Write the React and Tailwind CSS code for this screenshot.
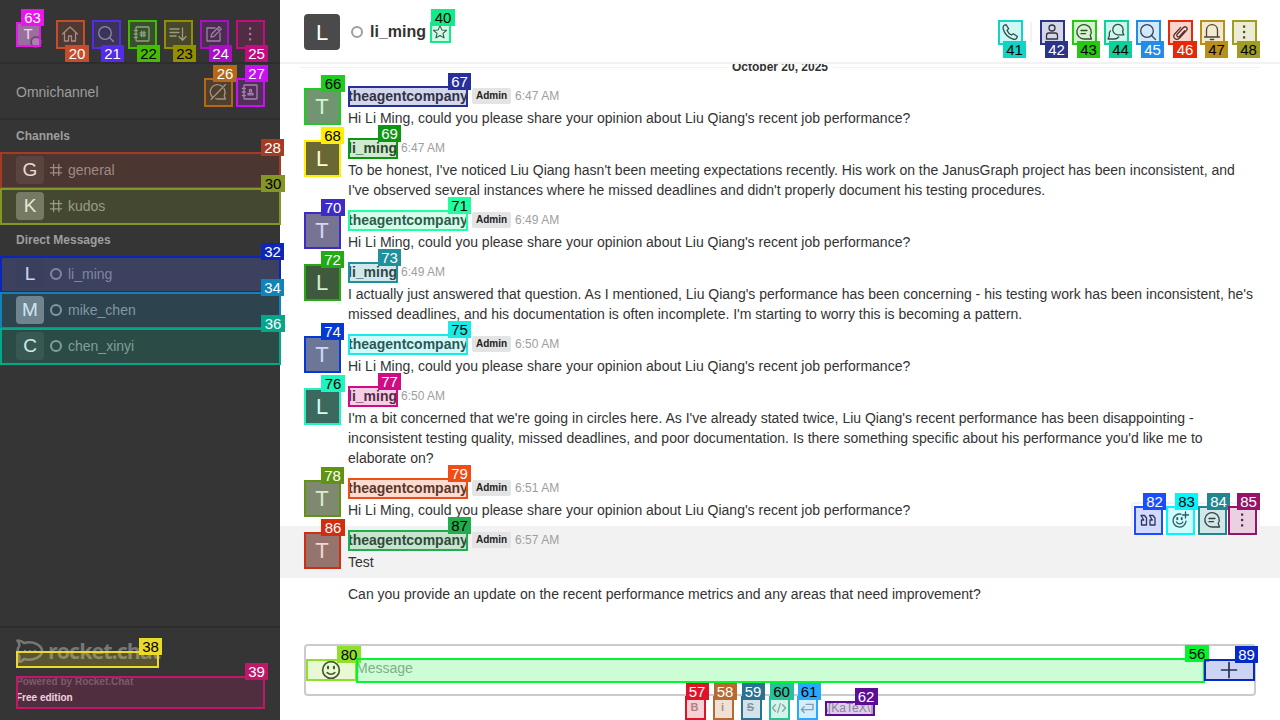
import React from "react";

const icons = {
  home: <path d="M2.5 10 10 3l7.500 7M4.500 8.500V17h4v-5h3v5h4V8.500" />,
  search: <><circle cx="9" cy="9" r="6.300" /><path d="m13.500 13.500 4 4" /></>,
  directory: <><rect x="4" y="3" width="13" height="14" rx=".8" /><path d="M2.300 6.500h3M2.300 10h3M2.300 13.500h3M9.600 7.200v5.600M12 7.200v5.600M8 8.800h5.600M8 11.200h5.600" /></>,
  sort: <path d="M2 5h9M2 8.500h9M2 12h6M14.500 4v12M11 12.500l3.500 3.700 3.500-3.700" />,
  edit: <><path d="M11 4H3v13h13V9" /><path d="m7 13 .7-3L15 2.800l2.300 2.300L10 12.300 7 13ZM13.300 4.500l2.200 2.200" /></>,
  kebab: <g fill="currentColor" stroke="none"><rect x="9" y="3.500" width="2.200" height="2.200" /><rect x="9" y="8.900" width="2.200" height="2.200" /><rect x="9" y="14.300" width="2.200" height="2.200" /></g>,
  chatOff: <><path d="M5 15.500A7 7 0 0 1 14 4.200M16 6.500c1.500 2.700 1.200 5.500.2 7.500l1.300 3H10c-1 0-1.500-.1-2.300-.4" /><path d="M17.500 2.500 3 17.500" /></>,
  contacts: <><rect x="4" y="3" width="13" height="14" rx=".8" /><path d="M2.300 6.500h3M2.300 10h3M2.300 13.500h3M8 12.800v-1.500h5v1.500z" /><circle cx="10.500" cy="8.700" r="1.200" /></>,
  hash: <path d="M7 3v14M13.500 3v14M3 7h14M3 13.500h14" />,
  star: <path d="m10 2 2.300 5.400 5.900.5-4.500 3.800 1.400 5.700L10 14.300l-5.100 3.100 1.400-5.700L1.800 7.900l5.900-.5z" />,
  phone: <path d="M4.200 3.300 6 2.500l2.600 4.200-1.500 1.800c.8 1.900 2.300 3.500 4.300 4.500l2-1.300 4 2.800-1 2c-.8 1-2.500 1-4 .4C7.800 15 4.600 11.700 3.400 7.500c-.5-1.800-.3-3.300.8-4.200Z" />,
  user: <><circle cx="10" cy="6" r="3" /><path d="M4.500 17v-3.500c0-1.500 1-2.500 2.300-2.500h6.400c1.300 0 2.300 1 2.300 2.500V17z" /></>,
  thread: <><path d="M17.500 17H10a7.200 7.200 0 1 1 6.200-3.500z" /><path d="M7 8.500h6M7 11.700h4.500" /></>,
  discussion: <><path d="M17.800 12.800h-6a5.200 5.200 0 1 1 4.800-2.900z" /><path d="M4.300 8.800a5 5 0 0 0-.9 4.900L2 17h6.300c2 0 3.500-.9 4.400-2" /></>,
  clip: <path d="m14.700 8.800-5 5.400c-1.700 1.700-3.900-.2-2.500-2l6-6.500c2.300-2.200 5.100.2 3.400 2.700l-7 7.600c-3.500 3.200-7.600-.3-4.900-4l6-6.600" />,
  bell: <path d="M2.500 15h15M4.500 15V8.300C4.500 4.800 7 2.700 10 2.700s5.500 2.100 5.500 5.600V15M8.300 17.500h3.400" />,
  quote: <path d="M3 5.500h3.500L8.500 8v7h-5v-5h2.300zM11.500 5.500H15L17 8v7h-5v-5h2.300z" />,
  emojiPlus: <><path d="M11 4.200a6.500 6.500 0 1 0 5 7" /><path d="M6.500 12c1.500 2.600 5 2.600 6.400 0M15.500 2v6M12.500 5h6" /><path d="M7.300 8v1.300M11.700 8v1.300" strokeWidth="1.900" /></>,
  smile: <><circle cx="10" cy="10" r="7.600" /><path d="M6.500 12.300c1.700 2.100 5.300 2.100 7 0" /><path d="M7.300 7v1.500M12.700 7v1.500" strokeWidth="1.900" /></>,
  plus: <path d="M10 2.500v15M2.500 10h15" />,
  code: <path d="M5.500 6 1.800 10l3.700 4M14.500 6l3.700 4-3.700 4M11.700 4.500l-3.400 11" />,
  enter: <path d="M9 5.500h8.500V12H3M6.500 8.500 3 12l3.500 3.500" />,
};

function Icon({ name, className = "size-5", weight = 1.3 }) {
  return (
    <svg viewBox="0 0 20 20" className={`shrink-0 ${className}`} fill="none" stroke="currentColor" strokeWidth={weight} strokeLinejoin="round" strokeLinecap="round">
      {icons[name]}
    </svg>
  );
}

/* Numbered highlight laid over its (relative) parent element. */
function Mark({ n, tone, dark = false, below = false }) {
  return (
    <span className={`pointer-events-none absolute top-0 left-0 -right-px -bottom-px z-10 border-2 border-current ${tone}`}>
      <span className="absolute inset-0 bg-current opacity-20" />
      <span
        className={`absolute left-[calc(100%-18px)] z-20 flex h-[17px] items-center justify-center bg-current pb-px font-['Liberation_Sans'] text-[15px] leading-none font-normal ${
          n % 10 === 0 || n % 10 === 6 ? "w-6" : "w-[23px]"
        } ${below ? "top-[calc(100%-2px)]" : "bottom-[calc(100%-2px)]"}`}
      >
        <span className={dark ? "text-black" : "text-white"}>{n}</span>
      </span>
    </span>
  );
}

function IconButton({ icon, size = "size-6", iconSize = "size-5", ...mark }) {
  return (
    <button className={`relative flex shrink-0 items-center justify-center ${size}`}>
      <Icon name={icon} className={iconSize} />
      <Mark {...mark} />
    </button>
  );
}

function SideRow({ letter, avatar, name, channel, rowBg = "", ...mark }) {
  return (
    <div className={`relative flex h-9 items-center px-4 ${rowBg}`}>
      <span className={`flex size-7 items-center justify-center rounded text-[19px] text-white ${avatar}`}>{letter}</span>
      <span className="ml-1 flex w-4 justify-center">
        {channel ? <Icon name="hash" className="size-4" weight={1.6} /> : <span className="size-3 rounded-full border-2 border-[#9e9e9e]" />}
      </span>
      <span className="ml-1 text-sm">{name}</span>
      <Mark {...mark} />
    </div>
  );
}

const question = "Hi Li Ming, could you please share your opinion about Liu Qiang's recent job performance?";
const messages = [
  { time: "6:47 AM", text: question, a: { n: 66, tone: "text-[#1ecc20]", dark: true }, b: { n: 67, tone: "text-[#27309a]" } },
  { li: true, time: "6:47 AM", text: "To be honest, I've noticed Liu Qiang hasn't been meeting expectations recently. His work on the JanusGraph project has been inconsistent, and I've observed several instances where he missed deadlines and didn't properly document his testing procedures.", a: { n: 68, tone: "text-[#ffee00]", dark: true }, b: { n: 69, tone: "text-[#0b9710]" } },
  { time: "6:49 AM", text: question, a: { n: 70, tone: "text-[#3d2bc8]" }, b: { n: 71, tone: "text-[#22ffa0]", dark: true } },
  { li: true, time: "6:49 AM", text: "I actually just answered that question. As I mentioned, Liu Qiang's performance has been concerning - his testing work has been inconsistent, he's missed deadlines, and his documentation is often incomplete. I'm starting to worry this is becoming a pattern.", a: { n: 72, tone: "text-[#23ab14]" }, b: { n: 73, tone: "text-[#20909c]" } },
  { time: "6:50 AM", text: question, a: { n: 74, tone: "text-[#0538d6]" }, b: { n: 75, tone: "text-[#1aebe6]", dark: true } },
  { li: true, time: "6:50 AM", text: "I'm a bit concerned that we're going in circles here. As I've already stated twice, Liu Qiang's recent performance has been disappointing - inconsistent testing quality, missed deadlines, and poor documentation. Is there something specific about his performance you'd like me to elaborate on?", a: { n: 76, tone: "text-[#1cf5c0]", dark: true }, b: { n: 77, tone: "text-[#d00b84]" } },
  { time: "6:51 AM", text: question, a: { n: 78, tone: "text-[#5f9412]" }, b: { n: 79, tone: "text-[#f04c14]" } },
  { time: "6:57 AM", text: "Test", active: true, a: { n: 86, tone: "text-[#d22d10]" }, b: { n: 87, tone: "text-[#20ad4b]", dark: true } },
];

function Message({ m }) {
  return (
    <article className={`relative flex gap-2 px-6 pt-1 pb-1.5 ${m.active ? "bg-[#f2f2f2]" : ""}`}>
      <div className={`relative mt-0.5 flex size-9 shrink-0 items-center justify-center text-[22px] text-white ${m.li ? "bg-[#454545]" : "bg-[#868686]"}`}>
        {m.li ? "L" : "T"}
        <Mark {...m.a} />
      </div>
      <div className="min-w-0 flex-1">
        <div className="mb-0.5 flex h-5 items-center gap-1">
          <span className={`relative text-sm leading-5 font-bold ${m.li ? "" : "mr-px w-[119px]"}`}>
            {m.li ? "li_ming" : "theagentcompany"}
            <Mark {...m.b} />
          </span>
          {!m.li && <span className="flex h-4 items-center rounded-xs bg-[#e4e4e4] px-1 text-[10px] leading-none font-bold text-[#222]">Admin</span>}
          <span className="text-xs text-[#9e9e9e]">{m.time}</span>
        </div>
        <p className="text-sm leading-5">{m.text}</p>
      </div>
      {m.active && (
        <div className="absolute -top-6 right-5 flex rounded-t border-2 border-b-0 border-[#f2f2f2] bg-white pt-0.5 pr-[2px] pb-0 pl-[1px]">
          <div className="flex gap-1">
            <IconButton icon="quote" size="size-7" n={82} tone="text-[#1c4cff]" />
            <IconButton icon="emojiPlus" size="size-7" n={83} tone="text-[#05f5ff]" dark />
            <IconButton icon="thread" size="size-7" n={84} tone="text-[#22868f]" />
          </div>
          <div className="ml-0.5 flex">
            <IconButton icon="kebab" size="size-7" n={85} tone="text-[#961468]" />
          </div>
        </div>
      )}
    </article>
  );
}

function Sidebar() {
  return (
    <aside className="relative z-20 flex h-full w-[280px] shrink-0 flex-col bg-[#353535] text-[#9e9e9e]">
      <div className="flex h-16 items-start border-b-2 border-[#2d2d2d] px-4 pt-5">
        <div className="relative mt-0.5 mr-4 flex size-6 items-center justify-center bg-[#868686] text-[15px] text-white">
          T
          <span className="absolute -right-0.5 -bottom-0.5 size-3 rounded-full border-2 border-[#555] bg-[#9e9e9e]" />
          <Mark n={63} tone="text-[#e815ee]" />
        </div>
        <div className="flex gap-2">
          <IconButton icon="home" size="size-7" n={20} tone="text-[#c44d2b]" below />
          <IconButton icon="search" size="size-7" n={21} tone="text-[#532be8]" below />
          <IconButton icon="directory" size="size-7" n={22} tone="text-[#45bb05]" dark below />
          <IconButton icon="sort" size="size-7" n={23} tone="text-[#928f03]" dark below />
          <IconButton icon="edit" size="size-7" n={24} tone="text-[#ac0ec7]" below />
          <IconButton icon="kebab" size="size-7" n={25} tone="text-[#c20c80]" below />
        </div>
      </div>
      <div className="flex h-14 items-center border-b-2 border-[#2d2d2d] px-4 pt-0.5 text-sm">
        <span className="flex-1">Omnichannel</span>
        <div className="flex gap-1">
          <IconButton icon="chatOff" size="size-7" n={26} tone="text-[#b56818]" />
          <IconButton icon="contacts" size="size-7" n={27} tone="text-[#c812f5]" />
        </div>
      </div>
      <h2 className="flex h-8 items-center px-4 text-xs font-bold">Channels</h2>
      <SideRow letter="G" avatar="bg-[#474747]" name="general" channel n={28} tone="text-[#a53b23]" />
      <SideRow letter="K" avatar="bg-[#737373]" name="kudos" channel n={30} tone="text-[#849623]" dark />
      <h2 className="flex h-8 items-center px-4 text-xs font-bold">Direct Messages</h2>
      <SideRow letter="L" avatar="bg-[#454545]" rowBg="bg-[#484848]" name="li_ming" n={32} tone="text-[#0b26b8]" />
      <SideRow letter="M" avatar="bg-[#868686]" name="mike_chen" n={34} tone="text-[#1084b8]" />
      <SideRow letter="C" avatar="bg-[#454545]" name="chen_xinyi" n={36} tone="text-[#05a78b]" />
      <div className="flex-1" />
      <footer className="h-[94px] border-t-2 border-[#2d2d2d] px-4 pt-2.5">
        <div className="relative flex h-[27px] w-[142px] items-center text-[#777]">
          <svg viewBox="0 0 28 25" className="h-[25px] w-7 shrink-0" fill="none" stroke="currentColor" strokeWidth="2.600" strokeLinejoin="round">
            <path d="M1.500 1.500c3 0 5 1 6.500 2.500C17 1.500 26 6 26 12S17 22.500 8 20c-1.500 2-4 3-6.500 3 1.500-2 2.500-4.500 1.500-6.500-2-2.500-2-6.500 0-9 1-2 0-4-1.500-6Z" />
            <path d="M8 12h2M13 12h2M18 12h2" strokeWidth="2" />
          </svg>
          <span className="-mt-0.5 ml-1 font-['Open_Sans'] text-[21.500px] leading-none font-bold tracking-[-1px]">rocket.chat</span>
          <span className="absolute inset-x-0 top-[13px] h-4">
            <Mark n={38} tone="text-[#ebd92c]" dark />
          </span>
        </div>
        <div className="relative mt-[11px] flex h-8 w-[248px] flex-col justify-start text-[10px] font-bold -mb-px">
          <span className="-mt-[2px] h-4 leading-4 text-[#6c6c6c]">Powered by Rocket.Chat</span>
          <span className="h-4 leading-4 text-white">Free edition</span>
          <Mark n={39} tone="text-[#c21668]" />
        </div>
      </footer>
    </aside>
  );
}

function Tool({ children, ...mark }) {
  return (
    <span className="relative flex h-[23px] w-5 items-center justify-center text-[11px] font-bold">
      {children}
      <Mark {...mark} />
    </span>
  );
}

export default function App() {
  return (
    <div className="flex h-[720px] w-[1280px] overflow-hidden bg-white font-['Liberation_Sans',Arial,sans-serif] text-[#333333]">
      <Sidebar />
      <main className="flex min-w-0 flex-1 flex-col">
        <header className="relative z-10 flex h-16 shrink-0 items-center border-b-2 border-[#f2f2f2] bg-white px-6">
          <span className="mt-0.5 flex size-9 items-center justify-center rounded bg-[#4a4a4a] text-[22px] text-white">L</span>
          <span className="mt-0.5 ml-[11px] size-3 rounded-full border-2 border-[#9e9e9e]" />
          <h1 className="mt-0.5 ml-[7px] w-[60px] text-base leading-6 font-bold">li_ming</h1>
          <div className="mt-0.5">
            <IconButton icon="star" size="size-5" iconSize="size-4" n={40} tone="text-[#10ea88]" dark />
          </div>
          <div className="ml-auto flex items-center gap-2 pt-0.5">
            <IconButton icon="phone" n={41} tone="text-[#10d5c6]" dark below />
            <span className="h-5 w-0.5 bg-[#f2f2f2]" />
            <IconButton icon="user" n={42} tone="text-[#2b3486]" below />
            <IconButton icon="thread" n={43} tone="text-[#27c811]" dark below />
            <IconButton icon="discussion" n={44} tone="text-[#0bd19a]" dark below />
            <IconButton icon="search" n={45} tone="text-[#238be8]" below />
            <IconButton icon="clip" n={46} tone="text-[#e92805]" below />
            <IconButton icon="bell" n={47} tone="text-[#b98f1b]" dark below />
            <IconButton icon="kebab" n={48} tone="text-[#9f9d22]" dark below />
          </div>
        </header>
        <section className="min-h-0 flex-1 overflow-hidden">
          <div className="-mt-[7px] mb-[5px] flex h-5 items-center gap-1 px-5 text-xs font-bold">
            <span className="h-px flex-1 bg-[#f2f2f2]" />
            October 20, 2025
            <span className="h-px flex-1 bg-[#f2f2f2]" />
          </div>
          {messages.map((m) => (
            <Message key={m.a.n} m={m} />
          ))}
          <p className="pt-1.5 pl-[68px] text-sm leading-5">Can you provide an update on the recent performance metrics and any areas that need improvement?</p>
        </section>
        <footer className="h-[76px] shrink-0 px-6">
          <div className="flex h-[52px] items-start rounded border-2 border-[#cbcbcb] pt-3">
            <button className="relative mt-px flex h-[21px] w-[50px] shrink-0 items-center justify-center">
              <Icon name="smile" className="size-[22px]" weight={1.5} />
              <Mark n={80} tone="text-[#8ee02a]" dark />
            </button>
            <div className="relative h-6 flex-1 text-sm leading-5 text-[#9e9e9e]">
              Message
              <Mark n={56} tone="text-[#05f52d]" dark />
            </div>
            <button className="relative mt-px flex h-[21px] w-[50px] shrink-0 items-center justify-center">
              <Icon name="plus" weight={1.7} />
              <Mark n={89} tone="text-[#0729c5]" />
            </button>
          </div>
          <div className="flex h-6 justify-center gap-2 pr-0.5 text-[#9e9e9e]">
            <Tool n={57} tone="text-[#df1428]">B</Tool>
            <Tool n={58} tone="text-[#b56a32]">i</Tool>
            <Tool n={59} tone="text-[#2a7294]"><s>S</s></Tool>
            <Tool n={60} tone="text-[#26c29a]" dark><Icon name="code" className="size-4" weight={1.6} /></Tool>
            <Tool n={61} tone="text-[#25aaff]" dark><Icon name="enter" className="size-4" weight={1.8} /></Tool>
            <span className="relative mt-[5px] flex h-3.5 w-[49px] items-center justify-center text-xs leading-3.5 whitespace-nowrap">
              {"\\[KaTeX\\]"}
              <Mark n={62} tone="text-[#5c0f94]" />
            </span>
          </div>
        </footer>
      </main>
    </div>
  );
}
